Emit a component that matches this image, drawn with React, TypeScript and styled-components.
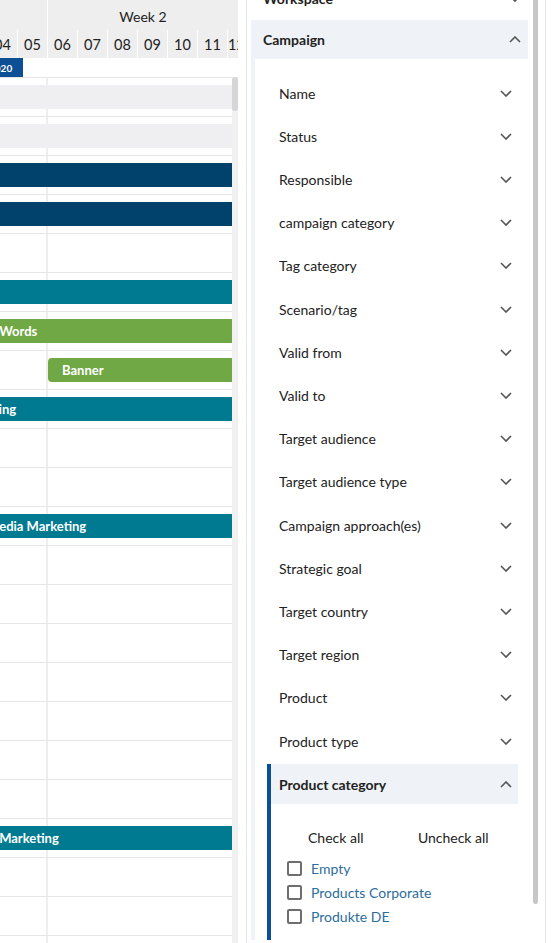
import React from 'react'
import styled, { createGlobalStyle } from 'styled-components'

const GlobalStyle = createGlobalStyle`
  html, body {
    margin: 0;
    padding: 0;
    background: #fff;
    font-family: Lato, 'Liberation Sans', sans-serif;
    color: #222;
  }
`

const DAY = 30
const VIEW = 238
const SCROLL_X = 163

const days = ['30', '31', '01', '02', '03', '04', '05', '06', '07', '08', '09', '10', '11', '12']
const weeks = [
  { label: 'Week 1', from: 0, span: 7 },
  { label: 'Week 2', from: 7, span: 7 },
]

type Tone = 'muted' | 'navy' | 'teal' | 'green'

type Bar = { tone: Tone, from: number, width: number, text?: string, start?: boolean }

const rows: (Bar | null)[] = [
  { tone: 'muted', from: 0, width: 420 },
  { tone: 'muted', from: 0, width: 420 },
  { tone: 'navy', from: 0, width: 420 },
  { tone: 'navy', from: 0, width: 420 },
  null,
  { tone: 'teal', from: 0, width: 420 },
  { tone: 'green', from: 132, width: 300, text: 'AdWords' },
  { tone: 'green', from: 211, width: 240, text: 'Banner', start: true },
  { tone: 'teal', from: 71, width: 360, text: 'Email Marketing' },
  null,
  null,
  { tone: 'teal', from: 99, width: 330, text: 'Social Media Marketing' },
  null, null, null, null, null, null, null,
  { tone: 'teal', from: 98, width: 330, text: 'Content Marketing' },
  null, null, null,
]

const filters = [
  'Name', 'Status', 'Responsible', 'campaign category', 'Tag category', 'Scenario/tag',
  'Valid from', 'Valid to', 'Target audience', 'Target audience type', 'Campaign approach(es)',
  'Strategic goal', 'Target country', 'Target region', 'Product', 'Product type',
]

const categories = ['Empty', 'Products Corporate', 'Produkte DE']

const toneColor: Record<Tone, string> = {
  muted: '#efeff1',
  navy: '#00426b',
  teal: '#007a91',
  green: '#70a845',
}

// width of a timeline span, cut at the right edge of the visible area
const visibleWidth = (from: number, span: number) => {
  const start = from * DAY
  const end = Math.min(start + span * DAY, SCROLL_X + VIEW)
  return Math.max(0, end - start)
}

const Page = styled.div`
  display: flex;
  height: 943px;
  overflow: hidden;
`

/* ---- gantt ---- */

const Gantt = styled.div`
  width: ${VIEW}px;
  flex: none;
  display: flex;
  flex-direction: column;
  overflow: hidden;
`

const Header = styled.div`
  background: #eeeeef;
  overflow: hidden;
`

const Track = styled.div`
  display: flex;
  margin-left: -${SCROLL_X}px;
`

const WeekCell = styled.div`
  flex: none;
  height: 30px;
  border-left: 1px solid #fff;
  box-sizing: border-box;
  display: flex;
  align-items: center;
  justify-content: center;
  font-size: 14px;
  padding-top: 2px;
`

const DayCell = styled.div`
  flex: none;
  height: 28px;
  line-height: 29px;
  border-left: 1px solid #fff;
  box-sizing: border-box;
  overflow: hidden;
  white-space: nowrap;
  text-align: center;
  font-size: 14.5px;
`

const DateRow = styled.div`
  position: relative;
  height: 19px;
  background: #fff;
`

const YearBadge = styled.span`
  position: absolute;
  top: 0;
  height: 19px;
  padding: 0 11px 0 9px;
  display: flex;
  align-items: center;
  background: #0d4f94;
  color: #fff;
  font-size: 10px;
  font-weight: 700;
`

const Body = styled.div`
  flex: 1;
  display: flex;
  min-height: 0;
`

const Rows = styled.div`
  width: 232px;
  overflow: hidden;
  background: linear-gradient(#eeeeee, #eeeeee) no-repeat 46px 0 / 2px 100%;
`

const Row = styled.div`
  position: relative;
  height: 39px;
  box-sizing: border-box;
  border-top: 1px solid #e6e6e6;
`

const BarBox = styled.div<{ $tone: Tone, $start?: boolean }>`
  position: absolute;
  top: 7px;
  height: 24px;
  background: ${p => toneColor[p.$tone]};
  border-radius: ${p => (p.$start ? '4px 0 0 4px' : '0')};
  color: #fff;
  font-size: 13px;
  font-weight: 700;
  display: flex;
  align-items: center;
  padding-left: 14px;
  box-sizing: border-box;
  white-space: nowrap;
`

const Rail = styled.div`
  width: 6px;
  background: #f1f1f1;
`

const Thumb = styled.div<{ $h: number }>`
  height: ${p => p.$h}px;
  background: #d6d6d6;
  border-radius: 3px;
`

/* ---- filter panel ---- */

const Side = styled.div`
  flex: none;
  width: 317px;
  box-sizing: border-box;
  padding: 0 9px 0 8px;
`

const SideBox = styled.div`
  height: 943px;
  box-sizing: border-box;
  border-left: 1px solid #e6e6e6;
  border-right: 1px solid #e6e6e6;
  padding-left: 4px;
  display: flex;
  overflow: hidden;
`

const SideContent = styled.div`
  width: 277px;
  flex: none;
  margin-top: -23px;
`

const SideRail = styled.div`
  width: 5px;
  margin-left: 5px;
`

const SideThumb = styled.div`
  height: 904px;
  background: #c6c6c6;
  border-radius: 0 0 3px 3px;
`

const SectionHead = styled.div<{ $open?: boolean, $tall?: boolean }>`
  height: ${p => (p.$tall ? 43 : 39)}px;
  display: flex;
  align-items: center;
  justify-content: space-between;
  padding: 0 7px 0 12px;
  background: ${p => (p.$open ? '#eff2f6' : '#fff')};
  font-size: 14px;
  font-weight: 700;
`

const SectionBody = styled.div`
  border-left: 4px solid #eff2f6;
  padding: 11px 10px 0 12px;
`

const FilterRow = styled.div`
  height: 40px;
  margin-top: 3.2px;
  display: flex;
  align-items: center;
  justify-content: space-between;
  padding: 0 6px 0 12px;
  font-size: 14px;
`

const OpenFilter = styled.div`
  margin-top: 3.2px;
  border-left: 4px solid #0d4f94;
`

const OpenFilterHead = styled.div`
  height: 40px;
  display: flex;
  align-items: center;
  justify-content: space-between;
  padding: 0 6px 0 8px;
  background: #eff2f6;
  font-size: 14px;
  font-weight: 700;
`

const OpenFilterBody = styled.div`
  padding: 24px 0 11.6px;
`

const Actions = styled.div`
  display: flex;
  padding: 0 6px;
  margin-bottom: 8px;
`

const ActionButton = styled.button`
  flex: 1;
  border: 0;
  background: none;
  padding: 0;
  font: inherit;
  font-size: 14px;
  line-height: 20px;
  color: #222;
  cursor: pointer;
`

const CheckList = styled.div`
  padding-left: 16px;
`

const CheckItem = styled.label`
  display: flex;
  align-items: center;
  gap: 9px;
  height: 24px;
  font-size: 14px;
  color: #2e6d9c;
`

const Box = styled.span`
  width: 15px;
  height: 15px;
  box-sizing: border-box;
  border: 2px solid #6e6e6e;
  border-radius: 2px;
  flex: none;
`

const ChevronSvg = styled.svg`
  flex: none;
  fill: none;
  stroke: #555;
  stroke-width: 1.6;
`

const Chevron = ({ up }: { up?: boolean }) => (
  <ChevronSvg width="12" height="7" viewBox="0 0 12 7">
    <polyline points={up ? '1,6 6,1 11,6' : '1,1 6,6 11,1'} />
  </ChevronSvg>
)

export default function App() {
  return (
    <Page>
      <GlobalStyle />
      <Gantt>
        <Header>
          <Track>
            {weeks.map(w => (
              <WeekCell key={w.label} style={{ width: visibleWidth(w.from, w.span) }}>{w.label}</WeekCell>
            ))}
          </Track>
          <Track>
            {days.map((d, i) => (
              <DayCell key={i} style={{ width: visibleWidth(i, 1) }}>{d}</DayCell>
            ))}
          </Track>
        </Header>
        <DateRow>
          <YearBadge style={{ left: 143 - SCROLL_X }}>2020</YearBadge>
        </DateRow>
        <Body>
          <Rows>
            {rows.map((bar, i) => (
              <Row key={i}>
                {bar && (
                  <BarBox
                    $tone={bar.tone}
                    $start={bar.start}
                    style={{ left: bar.from - SCROLL_X, width: bar.width }}
                  >
                    {bar.text}
                  </BarBox>
                )}
              </Row>
            ))}
          </Rows>
          <Rail>
            <Thumb $h={34} />
          </Rail>
        </Body>
      </Gantt>

      <Side>
        <SideBox>
          <SideContent>
            <SectionHead $tall>
              Workspace
              <Chevron />
            </SectionHead>
            <SectionHead $open>
              Campaign
              <Chevron up />
            </SectionHead>
            <SectionBody>
              {filters.map(f => (
                <FilterRow key={f}>
                  {f}
                  <Chevron />
                </FilterRow>
              ))}
              <OpenFilter>
                <OpenFilterHead>
                  Product category
                  <Chevron up />
                </OpenFilterHead>
                <OpenFilterBody>
                  <Actions>
                    <ActionButton>Check all</ActionButton>
                    <ActionButton>Uncheck all</ActionButton>
                  </Actions>
                  <CheckList>
                    {categories.map(c => (
                      <CheckItem key={c}>
                        <Box />
                        {c}
                      </CheckItem>
                    ))}
                  </CheckList>
                </OpenFilterBody>
              </OpenFilter>
            </SectionBody>
          </SideContent>
          <SideRail>
            <SideThumb />
          </SideRail>
        </SideBox>
      </Side>
    </Page>
  )
}
